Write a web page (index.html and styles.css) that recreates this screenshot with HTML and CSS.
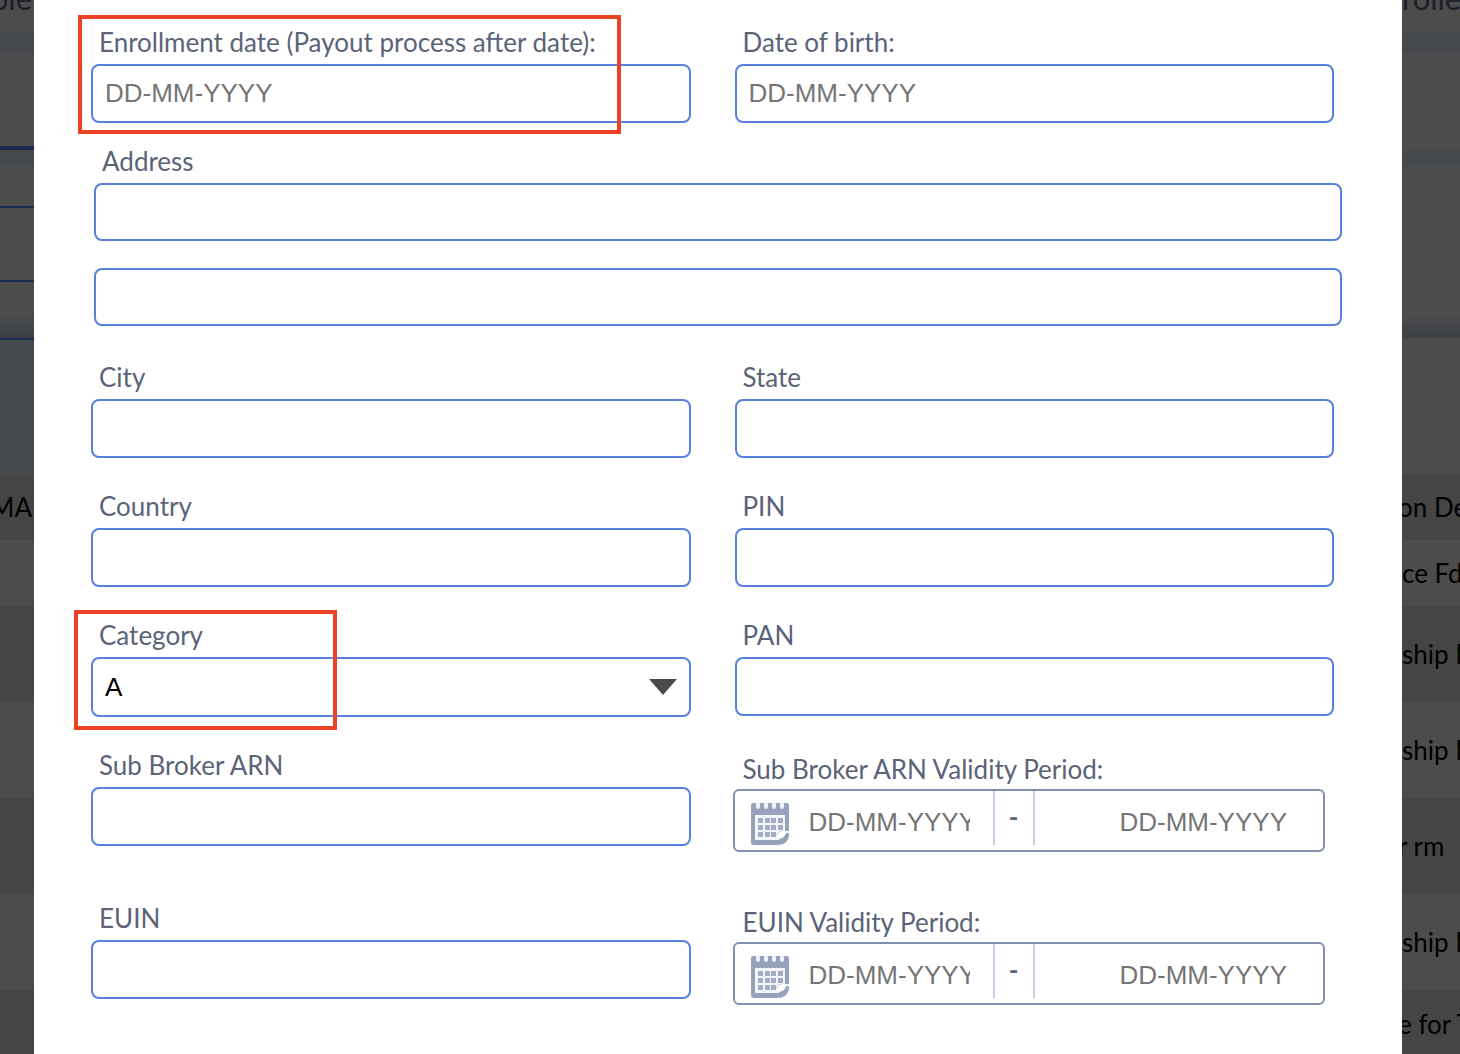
FILE: index.html
```html
<!DOCTYPE html>
<html lang="en">
<head>
    <meta charset="UTF-8">
    <meta name="viewport" content="width=device-width, initial-scale=1.0">
    <title>Sub Broker Details</title>
    <link rel="stylesheet" href="styles.css">
</head>
<body>
    <!-- dimmed page behind the dialog -->
    <div class="page" aria-hidden="true">
        <div class="pageHead"><span class="cellLeft">ble</span><span class="cellRight">rolle</span></div>
        <div class="band"></div>
        <div class="tabs"><div class="tabActive"></div></div>
        <div class="band bandSmall"></div>
        <div class="filters"><div class="filterBox"></div></div>
        <div class="band bandShadow"></div>
        <div class="tableHead"><div class="headLeft"></div></div>
        <div class="row dark"><span class="cellLeft">MA</span><span class="cellRight cut">on De</span></div>
        <div class="row"><span class="cellRight">ce Fd</span></div>
        <div class="row tall dark"><span class="cellRight">ship M</span></div>
        <div class="row tall"><span class="cellRight">ship M</span></div>
        <div class="row tall dark"><span class="cellRight cut">r rm</span></div>
        <div class="row tall"><span class="cellRight">ship M</span></div>
        <div class="row last dark"><span class="cellRight cut">e for T</span></div>
    </div>

    <main class="modal">
        <form class="form">
            <div class="formRow">
                <div class="field">
                    <label for="enrollDate">Enrollment date (Payout process after date):</label>
                    <input type="text" id="enrollDate" placeholder="DD-MM-YYYY">
                    <div class="mark markDate"></div>
                </div>
                <div class="field">
                    <label for="dob">Date of birth:</label>
                    <input type="text" id="dob" placeholder="DD-MM-YYYY">
                </div>
            </div>

            <div class="address">
                <label for="address1">Address</label>
                <input type="text" id="address1">
                <input type="text" id="address2" aria-label="Address line 2">
            </div>

            <div class="formRow">
                <div class="field">
                    <label for="city">City</label>
                    <input type="text" id="city">
                </div>
                <div class="field">
                    <label for="state">State</label>
                    <input type="text" id="state">
                </div>
            </div>

            <div class="formRow">
                <div class="field">
                    <label for="country">Country</label>
                    <input type="text" id="country">
                </div>
                <div class="field">
                    <label for="pin">PIN</label>
                    <input type="text" id="pin">
                </div>
            </div>

            <div class="formRow">
                <div class="field">
                    <label for="category">Category</label>
                    <div class="selectWrap">
                        <select id="category">
                            <option>A</option>
                            <option>B</option>
                            <option>C</option>
                        </select>
                        <svg class="arrow" viewBox="0 0 28 16"><path d="M0 0H28L14 16Z"/></svg>
                    </div>
                    <div class="mark markCategory"></div>
                </div>
                <div class="field">
                    <label for="pan">PAN</label>
                    <input type="text" id="pan">
                </div>
            </div>

            <div class="formRow">
                <div class="field">
                    <label for="arn">Sub Broker ARN</label>
                    <input type="text" id="arn">
                </div>
                <div class="field period">
                    <label for="arnFrom">Sub Broker ARN Validity Period:</label>
                    <div class="range">
                        <svg class="calendar" viewBox="0 0 39 43"><use href="#calendarIcon"/></svg>
                        <input type="text" class="from" id="arnFrom" placeholder="DD-MM-YYYY">
                        <span class="dash">-</span>
                        <input type="text" class="to" aria-label="ARN valid to" placeholder="DD-MM-YYYY">
                    </div>
                </div>
            </div>

            <div class="formRow euinRow">
                <div class="field">
                    <label for="euin">EUIN</label>
                    <input type="text" id="euin">
                </div>
                <div class="field period">
                    <label for="euinFrom">EUIN Validity Period:</label>
                    <div class="range">
                        <svg class="calendar" viewBox="0 0 39 43"><use href="#calendarIcon"/></svg>
                        <input type="text" class="from" id="euinFrom" placeholder="DD-MM-YYYY">
                        <span class="dash">-</span>
                        <input type="text" class="to" aria-label="EUIN valid to" placeholder="DD-MM-YYYY">
                    </div>
                </div>
            </div>
        </form>
    </main>

    <svg class="sprite" width="0" height="0">
        <symbol id="calendarIcon" viewBox="0 0 39 43">
            <path fill="#97a1bc" d="M2 1H36Q38 1 38 3V29H32Q26 29 26 35V43H3Q0 43 0 40V3Q0 1 2 1Z"/>
            <path fill="#f3f5fa" d="M4 13H34V29H31Q26 29 26 34V38H4Z"/>
            <path fill="#97a1bc" d="M38 31Q38 42 28 43V37Q34 36 35 31Z"/>
            <path fill="#97a1bc" d="M26 38H34L38 31V34Q36 42 26 43Z"/>
            <path stroke="#eef1f8" stroke-width="4" stroke-linecap="round" d="M7 2V5M15 2V5M23 2V5M31 2V5"/>
            <path fill="#a3acc6" d="M7 16h5v5h-5zM14 16h5v5h-5zM20 16h5v5h-5zM27 16h5v5h-5zM7 23h5v5h-5zM14 23h5v5h-5zM20 23h5v5h-5zM27 23h5v5h-5zM7 30h5v5h-5zM14 30h5v5h-5zM20 30h5v5h-5z"/>
        </symbol>
    </svg>
</body>
</html>
```
FILE: styles.css
```css
*{
    margin: 0;
    box-sizing: border-box;
}

body{
    position: relative;
    min-height: 100vh;
    overflow: hidden;
    background: #4c4c4c;
    font-family: Lato, sans-serif;
    font-size: 26px;
    line-height: 32px;
}

/* page behind */

.page{
    color: #000;
}

.pageHead{
    display: flex;
    height: 32px;
    align-items: flex-end;
    padding-bottom: 18px;
    color: #1c1f2b;
    font-size: 31px;
}

.band{
    height: 20px;
    background: #46494d;
}

.bandSmall{
    height: 16px;
}

.bandShadow{
    height: 21px;
    background: linear-gradient(#484a4d, #3d4044);
}

.tabs{
    height: 98px;
}

.tabActive{
    width: 34px;
    height: 98px;
    border-bottom: 4px solid #192a50;
}

.filters{
    height: 151px;
    padding-top: 40px;
}

.filterBox{
    width: 34px;
    height: 76px;
    border-top: 2px solid #1b2b54;
    border-bottom: 2px solid #1b2b54;
}

.tableHead{
    height: 136px;
}

.headLeft{
    width: 34px;
    height: 136px;
    border-top: 2px solid #1b2b54;
    background: #46494d;
}

.row{
    display: flex;
    align-items: center;
    height: 66px;
}

.tall{
    height: 96px;
}

.last{
    height: 68px;
}

.dark{
    background: #454545;
}

.cellLeft{
    display: flex;
    justify-content: flex-end;
    width: 34px;
    padding-right: 2px;
    white-space: nowrap;
}

.cellRight{
    width: 58px;
    margin-left: auto;
    white-space: nowrap;
}

.cut{
    width: 62px;
}

/* dialog */

.modal{
    position: absolute;
    top: 0;
    right: 58px;
    bottom: 0;
    left: 34px;
    background: #fff;
}

.form{
    padding: 26px 68px 0 57px;
}

.formRow{
    display: grid;
    grid-template-columns: 1fr 1fr;
    align-items: start;
    gap: 44px;
    margin-bottom: 32px;
}

.field{
    position: relative;
}

label{
    display: block;
    padding-left: 8px;
    margin-bottom: 6px;
    color: #5b6379;
    line-height: 32px;
}

input, select{
    display: block;
    width: 100%;
    height: 59px;
    padding: 0 12px;
    border: 2px solid #5780df;
    border-radius: 8px;
    background: #fff;
    color: #000;
    font-family: "Liberation Sans", Arial, sans-serif;
    font-size: 26px;
}

input::placeholder{
    color: #757575;
    opacity: 1;
}

select{
    height: 60px;
    appearance: none;
}

.selectWrap{
    position: relative;
}

.arrow{
    position: absolute;
    top: 22px;
    right: 14px;
    width: 28px;
    height: 16px;
    fill: #4a4a4a;
    pointer-events: none;
}

.address{
    margin: -10px -8px 35px 3px;
}

.address input{
    height: 58px;
}

.address input + input{
    margin-top: 27px;
}

/* validity period */

.period{
    padding-top: 4px;
}

.period label{
    margin-bottom: 4px;
}

.range{
    display: flex;
    height: 63px;
    margin: 0 9px 0 -2px;
    padding-left: 16px;
    border: 2px solid #8390b0;
    border-radius: 6px;
}

.range input{
    height: 59px;
    padding: 4px 0 0;
    border: 0;
    background: none;
}

.calendar{
    flex: none;
    width: 39px;
    height: 43px;
    margin: 11px 19px 0 0;
}

.range .from{
    flex: none;
    width: 161px;
    margin-right: 23px;
}

.dash{
    flex: none;
    width: 42px;
    height: 54px;
    border: solid #c5cee2;
    border-width: 0 2px;
    color: #5b6379;
    font-weight: bold;
    line-height: 52px;
    text-align: center;
}

.range .to{
    flex: 1;
    min-width: 0;
    padding-right: 36px;
    text-align: right;
}

.euinRow{
    margin-top: 50px;
}

/* red highlight boxes */

.mark{
    position: absolute;
    border: 4px solid #eb4226;
    pointer-events: none;
}

.markDate{
    top: -11px;
    bottom: -11px;
    left: -13px;
    width: 543px;
}

.markCategory{
    top: -9px;
    bottom: -13px;
    left: -17px;
    width: 263px;
}
```
